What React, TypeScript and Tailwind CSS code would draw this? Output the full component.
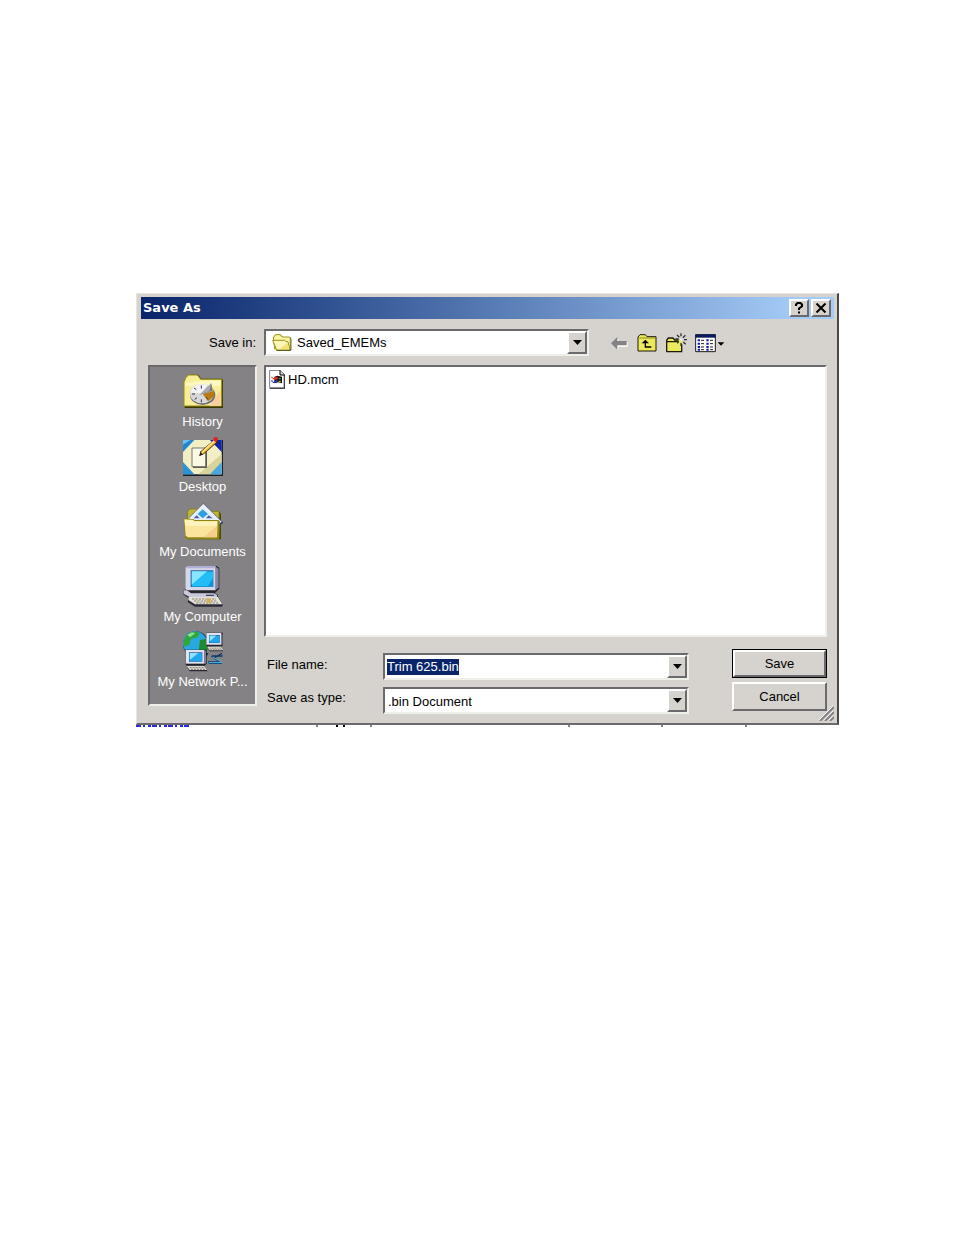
import { useEffect, useRef } from "react";
import type { ReactNode } from "react";

const sunken =
  "border-2 border-t-[#6b696b] border-l-[#6b696b] border-r-[#efefe9] border-b-[#efefe9]";
const raised =
  "bg-[#d6d3ce] border-2 border-t-white border-l-white border-r-[#6b696b] border-b-[#6b696b]";

function HistoryIcon() {
  return (
    <svg width="40" height="42" viewBox="111 27 120 126">
      <path d="M116 60l6-14 8-8h26l10 12h62l4 5v83h-116z" fill="#3b3900" />
      <path d="M114 60l6-14 8-7h26l10 13h63v80H114z" fill="#f7ee9a" stroke="#948f10" strokeWidth="3" />
      <path d="M118 62l44-4 8-2h54v16H118z" fill="#fdf8c0" />
      <path d="M190 132l34-48v48z" fill="#f9cfa0" />
      <ellipse cx="170" cy="99" rx="38" ry="30" fill="#6f6f72" />
      <ellipse cx="168" cy="95" rx="36" ry="29" fill="#d8d8da" />
      <path d="M134 92a34 28 0 0 1 50-22l-16 24z" fill="#f4f4f6" />
      <path d="M170 96l34-10v18l-18 14z" fill="#b67a16" />
      <path d="M162 98l34-34 4 22z" fill="#77777b" />
      <path d="M160 98l36-34-6 24z" fill="#a9a9ae" />
      <path d="M166 70v10M138 96h9M144 78l7 5M146 112l7-5M166 112v9M186 112l-5-6" stroke="#3c3c40" strokeWidth="3" />
    </svg>
  );
}

function DesktopIcon() {
  return (
    <svg width="40" height="42" viewBox="111 6 120 126">
      <path d="M111 18h120v108H111z" fill="#15202a" />
      <path d="M111 18h116v103H111z" fill="#f3efc4" />
      <path d="M227 60v61h-70z" fill="#d8d39a" />
      <path d="M111 18h34l-34 36z" fill="#1f86cf" />
      <path d="M111 18h22l-22 14z" fill="#6cc0ee" />
      <path d="M192 18h35v36z" fill="#1023a8" />
      <path d="M111 84l34 37h-34z" fill="#2a93d8" />
      <path d="M227 84v37h-35z" fill="#49a6e0" />
      <path d="M141 44h42v58h-42z" fill="#5a5a55" />
      <path d="M138 42h41v56h-41z" fill="#fbf8e4" stroke="#77756a" strokeWidth="3" />
      <path d="M160 66l4-14 42-36 9 8-42 37z" fill="#3f2400" />
      <path d="M162 60l6-9 36-33 7 7-40 35z" fill="#f5b83a" />
      <path d="M166 54l38-35 3 3-38 35z" fill="#fde790" />
      <path d="M160 66l3-12 8 7z" fill="#222" />
      <circle cx="209" cy="16" r="7" fill="#e02222" />
    </svg>
  );
}

function DocumentsIcon() {
  return (
    <svg width="40" height="42" viewBox="111 9 120 126">
      <path d="M124 42l6-9h24l5 7h60l6 8v76h-98z" fill="#4a4700" />
      <path d="M124 42l6-9h22l5 7h62v80h-92z" fill="#bdb63a" stroke="#88831a" strokeWidth="3" />
      <path d="M172 16l60 58-14 12h-70l-18-28z" fill="#33405e" />
      <path d="M172 17l55 54-14 12h-66l-17-24z" fill="#e8effc" />
      <path d="M170 34l16 14-16 13-15-13z" fill="#2f9fe0" />
      <path d="M152 52l9 9h-18zM188 52l12 9h-20z" fill="#4a5fae" />
      <path d="M112 62l30 1 4 3h70l6 4-4 54h-94l-6-5z" fill="#8c8612" />
      <path d="M115 64l26 1 4 4h70l-2 49h-87l-7-5z" fill="#f9e59b" />
      <path d="M116 66l25 1 4 4h68l-1 12H118z" fill="#fdf3bd" />
      <path d="M213 84l-2 34h-40z" fill="#f7cf8c" />
    </svg>
  );
}

function ComputerIcon() {
  return (
    <svg width="40" height="42" viewBox="111 12 120 126">
      <path d="M118 16l6-4h88l8 6v62l-14 14h-80l-8-10z" fill="#24242c" />
      <path d="M118 16l5-3h86v72h-86l-5-5z" fill="#d7d7ea" />
      <path d="M209 14l9 6v56l-9 9z" fill="#8886a8" />
      <path d="M119 16l5-3h84l-4 6h-78z" fill="#b0afd8" />
      <path d="M134 25h68v50h-68z" fill="#14508e" />
      <path d="M137 28h64v46h-64z" fill="#22bdf4" />
      <path d="M137 28h46l-46 40z" fill="#86e6fd" />
      <path d="M185 74l16-26v26z" fill="#1291dc" />
      <path d="M112 84h12l10 8h70l12 6v14h-84l-20-14z" fill="#38364a" />
      <path d="M113 85h10l12 9h68l10 5v8h-78l-22-12z" fill="#c9c9da" />
      <path d="M180 98h24v4h-24z" fill="#4a4a5c" />
      <path d="M128 106h90l13 24-4 4h-80l-22-14z" fill="#2b2a38" />
      <path d="M128 105h88l13 22h-82l-20-13z" fill="#e4e2da" />
      <path d="M138 111h72M144 117h70M150 123h68" stroke="#8b8170" strokeWidth="3" strokeDasharray="7 3" />
      <path d="M182 109h12v14h-12z" fill="#d8b24a" />
    </svg>
  );
}

function SmallPc() {
  return (
    <>
      <path d="M-1-1h64v42l-6 6H3l-4-5z" fill="#22222c" />
      <path d="M0 0h56v41H0z" fill="#e2e1ee" />
      <path d="M56 0l5 4v36l-5 3z" fill="#8482a0" />
      <path d="M10 7h40v28H10z" fill="#124f9a" />
      <path d="M12 9h37v25H12z" fill="#1fa6ee" />
      <path d="M12 9h26L12 30z" fill="#8be4fc" />
      <path d="M4 50h52l10 14H12z" fill="#2c2a38" />
      <path d="M3 48h52l9 12H12z" fill="#dcdad4" />
      <path d="M12 53h42M16 58h42" stroke="#84796b" strokeWidth="3" strokeDasharray="6 3" />
    </>
  );
}

function NetworkIcon() {
  return (
    <svg width="40" height="42" viewBox="111 15 120 126">
      <circle cx="149" cy="54" r="38" fill="#0d2f4f" />
      <circle cx="147" cy="52" r="36" fill="#2ba7e0" />
      <path d="M112 50c2-18 14-30 30-33l20 3-8 14-20 6-4 16-14 6z" fill="#2fa53a" />
      <path d="M162 42l20-4 4 30-14 20-14-12z" fill="#1e8b2c" />
      <path d="M124 26l14-7 10 3-16 12z" fill="#8ce08a" />
      <path d="M158 78l30 4-14 20-18-4z" fill="#0d3420" />
      <g transform="translate(181 21) scale(.8 .86)">
        <SmallPc />
      </g>
      <g transform="translate(119 72)">
        <SmallPc />
      </g>
      <path d="M188 112h40M204 96l24-14M198 90h32M196 90l26 18M186 108h30" stroke="#123a66" strokeWidth="4" fill="none" />
      <path d="M200 93l24 13M188 110h40" stroke="#4cc0ee" strokeWidth="3" fill="none" />
    </svg>
  );
}

function OpenFolderIcon() {
  return (
    <svg width="20" height="18" viewBox="0 0 60 54">
      <path d="M4 14l6-9h16l6 7h22l4 5v34l-4 3H14z" fill="#22220a" />
      <path d="M4 14l6-9h15l6 7h22l2 4v32H8z" fill="#f8f3a2" stroke="#9a951c" strokeWidth="3" />
      <path d="M2 22h36l4 4h6l6 25H14z" fill="#fbf6b8" stroke="#9a951c" strokeWidth="3" />
      <path d="M24 48l22-18 5 18z" fill="#f1df78" />
    </svg>
  );
}

function FileIcon() {
  return (
    <svg width="17" height="19" viewBox="0 0 51 57">
      <path d="M2 1h32l14 13v42H2z" fill="#000" />
      <path d="M2 1h31l12 13v39H2z" fill="#fff" stroke="#84828c" strokeWidth="3" />
      <path d="M33 1v14h13" fill="#d6d3ce" stroke="#000" strokeWidth="3" />
      <path d="M16 20l10-3 13 3v20l-12-3-11 3z" fill="#101010" />
      <path d="M17 22l9-2v8l-9 2z" fill="#e03020" />
      <path d="M29 23l6 1v5l-6-1z" fill="#2c9c3c" />
      <path d="M17 32l9-2v6l-9 2z" fill="#2030d0" />
      <path d="M29 32l6 1v4l-6-1z" fill="#d8c020" />
      <path d="M7 22h4M11 26h6" stroke="#e03020" strokeWidth="4" />
      <path d="M7 33h4M11 37h6" stroke="#2030d0" strokeWidth="4" />
    </svg>
  );
}

function BackIcon() {
  return (
    <svg width="22" height="20" viewBox="24 22 66 60">
      <path d="M37 56l18-18v11h28v14H55v11z" fill="#fff" />
      <path d="M33 53l19-19v12h28v13H52v13z" fill="#848284" />
    </svg>
  );
}

function UpIcon() {
  return (
    <svg width="22" height="20" viewBox="111 22 66 60">
      <path d="M114 76V34l6-7h16l5 6h27v43z" fill="#ece95c" stroke="#1c1b05" strokeWidth="3" />
      <path d="M118 37h48" stroke="#8b8720" strokeWidth="3" />
      <path d="M136 42l11 11h-9v9h16v4h-20V53h-9z" fill="#000" />
    </svg>
  );
}

function NewFolderIcon() {
  return (
    <svg width="22" height="20" viewBox="198 22 66 60">
      <path d="M200 78V44l5-7h14l5 6h21v35z" fill="#ece95c" />
      <path d="M200 78V44l5-7h14l5 6h12M200 48h36M245 56v22h-46" fill="none" stroke="#1c1b05" strokeWidth="4" />
      <path d="M243 23v9M243 52v9M226 40h10M252 42h9M231 28l7 7M256 29l-7 7M250 49l7 7M236 48l-4 5" stroke="#33332c" strokeWidth="4" />
      <path d="M240 40h6v4h-6z" fill="#fff" />
    </svg>
  );
}

function ViewsIcon() {
  return (
    <svg width="30" height="20" viewBox="285 22 90 60">
      <path d="M287 27h59v51h-59z" fill="#fff" stroke="#1a1a1a" strokeWidth="3" />
      <path d="M286 26h61v10h-61z" fill="#0a1a5c" />
      <path d="M293 44h7M293 54h7M293 64h7M293 72h7M319 44h7M319 54h7M319 64h7M319 72h7" stroke="#1717a8" strokeWidth="6" />
      <path d="M303 44h9M303 54h9M303 64h9M303 72h9M330 44h9M330 54h9M330 64h9M330 72h9" stroke="#222" strokeWidth="3" />
      <path d="M353 50h20l-10 10z" fill="#000" />
    </svg>
  );
}

function DropArrow() {
  return (
    <svg width="9" height="5" viewBox="0 0 9 5">
      <path d="M0 0h9L4.500 5z" fill="#000" />
    </svg>
  );
}

const places: { name: string; icon: ReactNode }[] = [
  { name: "History", icon: <HistoryIcon /> },
  { name: "Desktop", icon: <DesktopIcon /> },
  { name: "My Documents", icon: <DocumentsIcon /> },
  { name: "My Computer", icon: <ComputerIcon /> },
  { name: "My Network P...", icon: <NetworkIcon /> },
];

const tools: { name: string; icon: ReactNode }[] = [
  { name: "Back", icon: <BackIcon /> },
  { name: "Up one level", icon: <UpIcon /> },
  { name: "Create new folder", icon: <NewFolderIcon /> },
  { name: "Views", icon: <ViewsIcon /> },
];

export default function App() {
  const fileName = useRef<HTMLInputElement>(null);

  useEffect(() => {
    fileName.current?.focus();
    fileName.current?.select();
  }, []);

  return (
    <main className="min-h-screen bg-white pt-[293px] pr-[115px] pb-16 pl-[136px] font-['Liberation_Sans',Arial,sans-serif] text-[13px] leading-4 text-black">
      <div
        role="dialog"
        aria-labelledby="title"
        className="border-t border-r-2 border-b-2 border-l border-t-[#e7e5e0] border-r-[#4a494a] border-b-[#6b696b] border-l-[#e7e5e0] bg-[#d6d3ce] pt-[3px] pr-[3px] pb-0.5 pl-1"
      >
        <header className="flex h-[22px] items-center gap-0.5 bg-linear-to-r from-[#0a246a] to-[#a5cbf7] to-95% pr-[3px] pl-0.5">
          <h1 id="title" className="flex-1 font-['DejaVu_Sans',Verdana,sans-serif] text-[13px] font-bold text-white">
            Save As
          </h1>
          <button aria-label="Help" className={`flex h-[18px] w-5 items-center justify-center ${raised}`}>
            <svg width="10" height="12" viewBox="0 0 10 12">
              <path d="M2 4V2.500L3.500 1h3L8 2.500v1.700L5 6.500V8" fill="none" stroke="#000" strokeWidth="2" />
              <path d="M4 9.500h2v2H4z" />
            </svg>
          </button>
          <button aria-label="Close" className={`flex h-[18px] w-5 items-center justify-center ${raised}`}>
            <svg width="12" height="10" viewBox="0 0 12 10">
              <path d="M1.500 .5l9 9M10.500 .5l-9 9" stroke="#000" strokeWidth="2" />
            </svg>
          </button>
        </header>

        <div className="mt-2.5 grid grid-cols-[109px_1fr] gap-x-[7px] gap-y-[9px] px-[7px]">
          <label htmlFor="folder" className="self-center pt-px pr-px text-right">
            Save in:
          </label>
          <div className="flex items-center">
            <div className={`relative h-[27px] w-[325px] bg-white ${sunken}`}>
              <select id="folder" className="h-full w-full appearance-none pl-[31px] outline-none">
                <option>Saved_EMEMs</option>
              </select>
              <span className="pointer-events-none absolute top-0.5 left-1.5">
                <OpenFolderIcon />
              </span>
              <span className={`pointer-events-none absolute inset-y-0 right-0 flex w-5 items-center justify-center ${raised}`}>
                <DropArrow />
              </span>
            </div>
            <div className="ml-[19px] flex gap-[7px]">
              {tools.map((tool) => (
                <button key={tool.name} aria-label={tool.name}>
                  {tool.icon}
                </button>
              ))}
            </div>
          </div>

          <nav className={`mb-2 flex flex-col gap-1.5 bg-[#848284] pt-1 ${sunken}`}>
            {places.map((place) => (
              <button key={place.name} className="flex flex-col items-center gap-px whitespace-nowrap text-white">
                {place.icon}
                <span>{place.name}</span>
              </button>
            ))}
          </nav>

          <div>
            <ul className={`h-[272px] bg-white p-[3px] ${sunken}`}>
              <li className="flex items-center gap-0.5">
                <FileIcon />
                HD.mcm
              </li>
            </ul>

            <div className="mt-3 flex items-start">
              <div className="flex w-[119px] flex-col gap-[17px] pt-2 pl-[3px]">
                <label htmlFor="file-name">File name:</label>
                <label htmlFor="file-type">Save as type:</label>
              </div>
              <div className="mt-1 flex flex-1 flex-col gap-[7px]">
                <div className={`flex h-[27px] items-center bg-white pl-0.5 ${sunken}`}>
                  <input
                    id="file-name"
                    ref={fileName}
                    defaultValue="Trim 625.bin"
                    className="h-4 min-w-0 flex-1 outline-none selection:bg-[#0a246a] selection:text-white"
                  />
                  <button aria-label="Recent names" className={`flex h-full w-5 items-center justify-center ${raised}`}>
                    <DropArrow />
                  </button>
                </div>
                <div className={`relative h-[27px] bg-white ${sunken}`}>
                  <select id="file-type" className="h-full w-full appearance-none pt-0.5 pl-[3px] outline-none">
                    <option>.bin Document</option>
                  </select>
                  <span className={`pointer-events-none absolute inset-y-0 right-0 flex w-5 items-center justify-center ${raised}`}>
                    <DropArrow />
                  </span>
                </div>
              </div>
              <div className="ml-[43px] flex w-[95px] flex-col gap-1">
                <button className="h-[29px] border border-black">
                  <span className={`flex h-full items-center justify-center ${raised}`}>Save</span>
                </button>
                <button className={`h-[29px] ${raised}`}>Cancel</button>
              </div>
            </div>
          </div>
        </div>

        {/* resize grip */}
        <div className="-mt-2 flex justify-end">
          <svg width="15" height="15" viewBox="0 0 15 15">
            <path d="M0 14L14 0M5 14l9-9M10 14l4-4" stroke="#fff" strokeWidth="1" />
            <path d="M1 15L15 1M6 15l9-9M11 15l4-4" stroke="#848284" strokeWidth="2" />
          </svg>
        </div>
      </div>

      {/* top edge of the window behind */}
      <svg width="100%" height="2" className="block">
        <path d="M0 1h54" stroke="#2a2ae0" strokeWidth="2" strokeDasharray="5 2 2 3 3 1" />
        <path d="M181 0v2M235 0v2M433 0v2M526 0v2M610 0v2" stroke="#848284" strokeWidth="2" />
        <path d="M201 0v2M208 0v2" stroke="#000" strokeWidth="2" />
      </svg>
    </main>
  );
}
